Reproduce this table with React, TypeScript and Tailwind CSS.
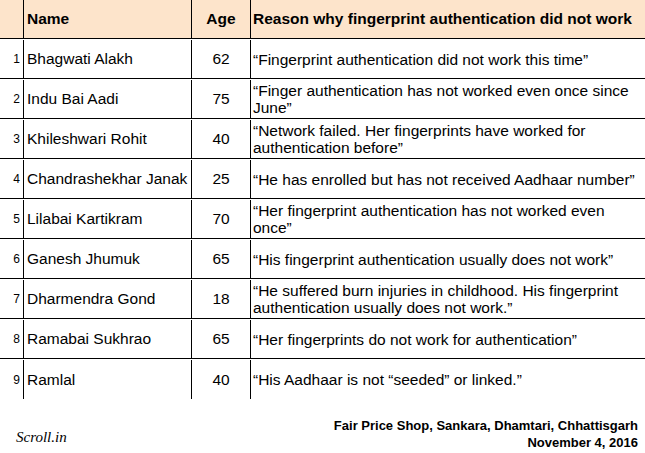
const rows = [
  { n: 1, name: "Bhagwati Alakh", age: 62, reason: "“Fingerprint authentication did not work this time”" },
  { n: 2, name: "Indu Bai Aadi", age: 75, reason: "“Finger authentication has not worked even once since June”" },
  { n: 3, name: "Khileshwari Rohit", age: 40, reason: "“Network failed. Her fingerprints have worked for authentication before”" },
  { n: 4, name: "Chandrashekhar Janak", age: 25, reason: "“He has enrolled but has not received Aadhaar number”" },
  { n: 5, name: "Lilabai Kartikram", age: 70, reason: "“Her fingerprint authentication has not worked even once”" },
  { n: 6, name: "Ganesh Jhumuk", age: 65, reason: "“His fingerprint authentication usually does not work”" },
  { n: 7, name: "Dharmendra Gond", age: 18, reason: "“He suffered burn injuries in childhood. His fingerprint authentication usually does not work.”" },
  { n: 8, name: "Ramabai Sukhrao", age: 65, reason: "“Her fingerprints do not work for authentication”" },
  { n: 9, name: "Ramlal", age: 40, reason: "“His Aadhaar is not “seeded” or linked.”" },
];

export default function App() {
  return (
    <div
      className="w-[645px] h-[453px] bg-white text-black overflow-hidden"
      style={{ fontFamily: '"Liberation Sans", Arial, sans-serif' }}
    >
      <div className="grid grid-cols-[23px_168px_59px_1fr] h-[39px] bg-[#fde4cb] border-b border-black font-bold text-[15.5px]">
        <div />
        <div className="border-l border-black flex items-center pl-[3px]">Name</div>
        <div className="border-l border-black flex items-center justify-center">Age</div>
        <div className="border-l border-black flex items-center pl-[2px] whitespace-nowrap">
          Reason why fingerprint authentication did not work
        </div>
      </div>
      {rows.map((r, i) => (
        <div
          key={r.n}
          className={
            "grid grid-cols-[23px_168px_59px_1fr] h-10 pt-px text-[15.5px] " +
            (i < rows.length - 1 ? "border-b border-black" : "")
          }
        >
          <div className="flex items-center justify-end pr-[3px] text-[12px]">{r.n}</div>
          <div className="border-l border-black flex items-center pl-[3px] whitespace-nowrap">{r.name}</div>
          <div className="border-l border-black flex items-center justify-center">{r.age}</div>
          <div className="border-l border-black flex items-center pl-[2px] pr-2 leading-[17px]">{r.reason}</div>
        </div>
      ))}
      <div className="flex items-end justify-between pl-4 pr-[7px] pt-[18px]">
        <div
          className="italic text-[15px] pb-[3px]"
          style={{ fontFamily: '"Liberation Serif", "Times New Roman", serif' }}
        >
          Scroll.in
        </div>
        <div className="text-right font-bold text-[13px] leading-[17px]">
          <div>Fair Price Shop, Sankara, Dhamtari, Chhattisgarh</div>
          <div>November 4, 2016</div>
        </div>
      </div>
    </div>
  );
}
